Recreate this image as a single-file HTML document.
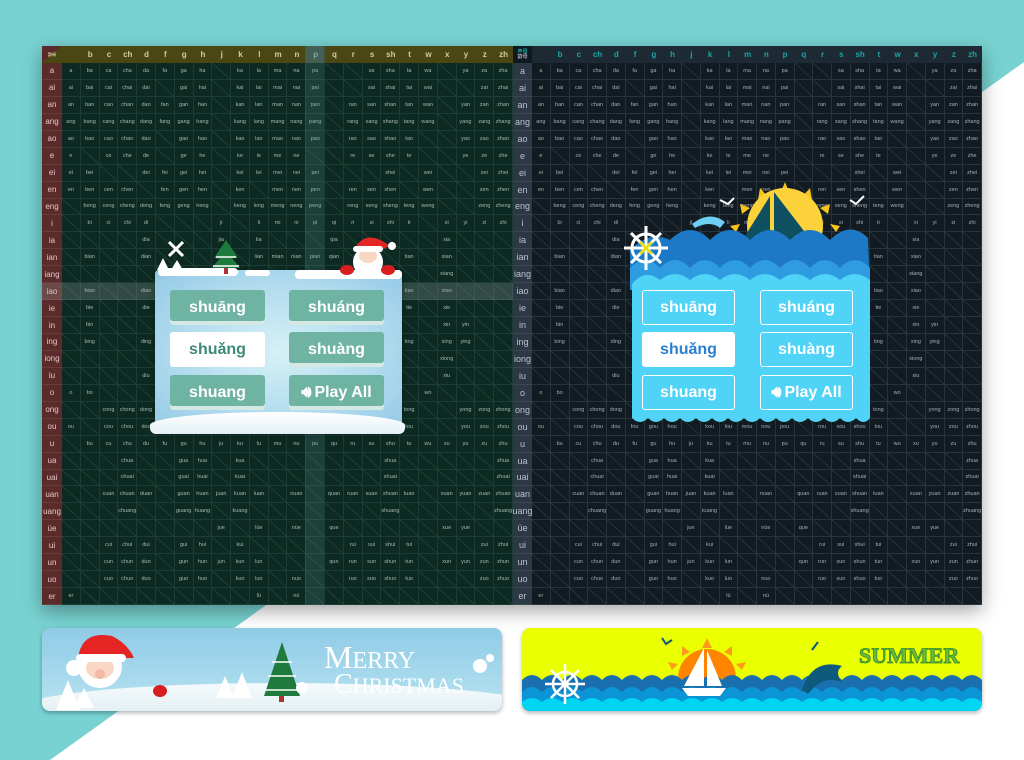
<!DOCTYPE html>
<html><head><meta charset="utf-8"><style>
*{margin:0;padding:0;box-sizing:border-box}
body{width:1024px;height:760px;position:relative;overflow:hidden;background:#fff;font-family:"Liberation Sans","Noto Sans CJK SC",sans-serif}
.bg{position:absolute;inset:0}
.wrap{position:absolute;left:42px;top:46px;width:940px;height:559px;box-shadow:0 6px 18px rgba(0,0,0,.35)}
.t{position:absolute;top:0;height:559px;display:grid;grid-template-rows:17px repeat(32,1fr)}
.L{left:0;width:471px;grid-template-columns:20px repeat(24,1fr);background:#0c2a21}
.R{left:471px;width:469px;grid-template-columns:19px repeat(24,1fr);background:#121b21}
.t i{font-style:normal;font-size:5.5px;color:#a7b7b2;display:flex;align-items:center;justify-content:center;overflow:hidden;white-space:nowrap}
.L i{border-right:1px solid #1d3d34;border-bottom:1px solid #1d3d34}
.R i{border-right:1px solid #28333b;border-bottom:1px solid #28333b;color:#a5adb2}
.L i:empty{background:linear-gradient(to top right,transparent calc(50% - .6px),#2a4c42 50%,transparent calc(50% + .6px))}
.R i:empty{background:linear-gradient(to top right,transparent calc(50% - .6px),#33404a 50%,transparent calc(50% + .6px))}
.t b{display:flex;align-items:center;justify-content:center;font-weight:normal;font-size:8px}
.L b{background:#5b2a2a;color:#e4c8c8;border-bottom:1px solid #6d3a3a}
.R b{background:#2c3944;color:#b8c4cc;border-bottom:1px solid #3a4852;font-size:9px}
.t u{text-decoration:none;display:flex;align-items:center;justify-content:center;font-size:8px;font-weight:bold}
.L u{background:#4a4712;color:#cfcfa8}
.R u{background:#1d2a33;color:#1aa5a5}
.ov{position:absolute}
.pop{position:absolute}
.cb{position:absolute;width:95px;height:35px;border-radius:3px;background:#6fb3a3;color:#fff;font-weight:bold;font-size:16px;display:flex;align-items:center;justify-content:center;box-shadow:inset 0 -4px 0 rgba(255,255,255,.7)}
.sb{position:absolute;width:93px;height:35px;border-radius:3px;border:1.5px solid #fff;color:#fff;font-weight:bold;font-size:16px;display:flex;align-items:center;justify-content:center}
</style></head><body>
<svg class="bg" width="1024" height="760"><polygon points="0,0 1024,0 1024,62 50,760 0,760" fill="#78d2d1"/></svg>

<div class="wrap">
<div class="t L">
<u style="font-size:4px;color:#d9d9b0;background:linear-gradient(to bottom right,#5b2a2a 50%,#4a4712 50%)">韵母</u><u></u><u>b</u><u>c</u><u>ch</u><u>d</u><u>f</u><u>g</u><u>h</u><u>j</u><u>k</u><u>l</u><u>m</u><u>n</u><u style="background:#3f5040;color:#8aa">p</u><u>q</u><u>r</u><u>s</u><u>sh</u><u>t</u><u>w</u><u>x</u><u>y</u><u>z</u><u>zh</u>
<b>a</b><i>a</i><i>ba</i><i>ca</i><i>cha</i><i>da</i><i>fa</i><i>ga</i><i>ha</i><i></i><i>ka</i><i>la</i><i>ma</i><i>na</i><i>pa</i><i></i><i></i><i>sa</i><i>sha</i><i>ta</i><i>wa</i><i></i><i>ya</i><i>za</i><i>zha</i>
<b>ai</b><i>ai</i><i>bai</i><i>cai</i><i>chai</i><i>dai</i><i></i><i>gai</i><i>hai</i><i></i><i>kai</i><i>lai</i><i>mai</i><i>nai</i><i>pai</i><i></i><i></i><i>sai</i><i>shai</i><i>tai</i><i>wai</i><i></i><i></i><i>zai</i><i>zhai</i>
<b>an</b><i>an</i><i>ban</i><i>can</i><i>chan</i><i>dan</i><i>fan</i><i>gan</i><i>han</i><i></i><i>kan</i><i>lan</i><i>man</i><i>nan</i><i>pan</i><i></i><i>ran</i><i>san</i><i>shan</i><i>tan</i><i>wan</i><i></i><i>yan</i><i>zan</i><i>zhan</i>
<b>ang</b><i>ang</i><i>bang</i><i>cang</i><i>chang</i><i>dang</i><i>fang</i><i>gang</i><i>hang</i><i></i><i>kang</i><i>lang</i><i>mang</i><i>nang</i><i>pang</i><i></i><i>rang</i><i>sang</i><i>shang</i><i>tang</i><i>wang</i><i></i><i>yang</i><i>zang</i><i>zhang</i>
<b>ao</b><i>ao</i><i>bao</i><i>cao</i><i>chao</i><i>dao</i><i></i><i>gao</i><i>hao</i><i></i><i>kao</i><i>lao</i><i>mao</i><i>nao</i><i>pao</i><i></i><i>rao</i><i>sao</i><i>shao</i><i>tao</i><i></i><i></i><i>yao</i><i>zao</i><i>zhao</i>
<b>e</b><i>e</i><i></i><i>ce</i><i>che</i><i>de</i><i></i><i>ge</i><i>he</i><i></i><i>ke</i><i>le</i><i>me</i><i>ne</i><i></i><i></i><i>re</i><i>se</i><i>she</i><i>te</i><i></i><i></i><i>ye</i><i>ze</i><i>zhe</i>
<b>ei</b><i>ei</i><i>bei</i><i></i><i></i><i>dei</i><i>fei</i><i>gei</i><i>hei</i><i></i><i>kei</i><i>lei</i><i>mei</i><i>nei</i><i>pei</i><i></i><i></i><i></i><i>shei</i><i></i><i>wei</i><i></i><i></i><i>zei</i><i>zhei</i>
<b>en</b><i>en</i><i>ben</i><i>cen</i><i>chen</i><i></i><i>fen</i><i>gen</i><i>hen</i><i></i><i>ken</i><i></i><i>men</i><i>nen</i><i>pen</i><i></i><i>ren</i><i>sen</i><i>shen</i><i></i><i>wen</i><i></i><i></i><i>zen</i><i>zhen</i>
<b>eng</b><i></i><i>beng</i><i>ceng</i><i>cheng</i><i>deng</i><i>feng</i><i>geng</i><i>heng</i><i></i><i>keng</i><i>leng</i><i>meng</i><i>neng</i><i>peng</i><i></i><i>reng</i><i>seng</i><i>sheng</i><i>teng</i><i>weng</i><i></i><i></i><i>zeng</i><i>zheng</i>
<b>i</b><i></i><i>bi</i><i>ci</i><i>chi</i><i>di</i><i></i><i></i><i></i><i>ji</i><i></i><i>li</i><i>mi</i><i>ni</i><i>pi</i><i>qi</i><i>ri</i><i>si</i><i>shi</i><i>ti</i><i></i><i>xi</i><i>yi</i><i>zi</i><i>zhi</i>
<b>ia</b><i></i><i></i><i></i><i></i><i>dia</i><i></i><i></i><i></i><i>jia</i><i></i><i>lia</i><i></i><i></i><i></i><i>qia</i><i></i><i></i><i></i><i></i><i></i><i>xia</i><i></i><i></i><i></i>
<b>ian</b><i></i><i>bian</i><i></i><i></i><i>dian</i><i></i><i></i><i></i><i>jian</i><i></i><i>lian</i><i>mian</i><i>nian</i><i>pian</i><i>qian</i><i></i><i></i><i></i><i>tian</i><i></i><i>xian</i><i></i><i></i><i></i>
<b>iang</b><i></i><i></i><i></i><i></i><i></i><i></i><i></i><i></i><i>jiang</i><i></i><i>liang</i><i></i><i>niang</i><i></i><i>qiang</i><i></i><i></i><i></i><i></i><i></i><i>xiang</i><i></i><i></i><i></i>
<b>iao</b><i></i><i>biao</i><i></i><i></i><i>diao</i><i></i><i></i><i></i><i>jiao</i><i></i><i>liao</i><i>miao</i><i>niao</i><i>piao</i><i>qiao</i><i></i><i></i><i></i><i>tiao</i><i></i><i>xiao</i><i></i><i></i><i></i>
<b>ie</b><i></i><i>bie</i><i></i><i></i><i>die</i><i></i><i></i><i></i><i>jie</i><i></i><i>lie</i><i>mie</i><i>nie</i><i>pie</i><i>qie</i><i></i><i></i><i></i><i>tie</i><i></i><i>xie</i><i></i><i></i><i></i>
<b>in</b><i></i><i>bin</i><i></i><i></i><i></i><i></i><i></i><i></i><i>jin</i><i></i><i>lin</i><i>min</i><i>nin</i><i>pin</i><i>qin</i><i></i><i></i><i></i><i></i><i></i><i>xin</i><i>yin</i><i></i><i></i>
<b>ing</b><i></i><i>bing</i><i></i><i></i><i>ding</i><i></i><i></i><i></i><i>jing</i><i></i><i>ling</i><i>ming</i><i>ning</i><i>ping</i><i>qing</i><i></i><i></i><i></i><i>ting</i><i></i><i>xing</i><i>ying</i><i></i><i></i>
<b>iong</b><i></i><i></i><i></i><i></i><i></i><i></i><i></i><i></i><i>jiong</i><i></i><i></i><i></i><i></i><i></i><i>qiong</i><i></i><i></i><i></i><i></i><i></i><i>xiong</i><i></i><i></i><i></i>
<b>iu</b><i></i><i></i><i></i><i></i><i>diu</i><i></i><i></i><i></i><i>jiu</i><i></i><i>liu</i><i>miu</i><i>niu</i><i></i><i>qiu</i><i></i><i></i><i></i><i></i><i></i><i>xiu</i><i></i><i></i><i></i>
<b>o</b><i>o</i><i>bo</i><i></i><i></i><i></i><i>fo</i><i></i><i></i><i></i><i></i><i></i><i>mo</i><i></i><i>po</i><i></i><i></i><i></i><i></i><i></i><i>wo</i><i></i><i></i><i></i><i></i>
<b>ong</b><i></i><i></i><i>cong</i><i>chong</i><i>dong</i><i></i><i>gong</i><i>hong</i><i></i><i>kong</i><i>long</i><i></i><i>nong</i><i></i><i></i><i>rong</i><i>song</i><i></i><i>tong</i><i></i><i></i><i>yong</i><i>zong</i><i>zhong</i>
<b>ou</b><i>ou</i><i></i><i>cou</i><i>chou</i><i>dou</i><i>fou</i><i>gou</i><i>hou</i><i></i><i>kou</i><i>lou</i><i>mou</i><i>nou</i><i>pou</i><i></i><i>rou</i><i>sou</i><i>shou</i><i>tou</i><i></i><i></i><i>you</i><i>zou</i><i>zhou</i>
<b>u</b><i></i><i>bu</i><i>cu</i><i>chu</i><i>du</i><i>fu</i><i>gu</i><i>hu</i><i>ju</i><i>ku</i><i>lu</i><i>mu</i><i>nu</i><i>pu</i><i>qu</i><i>ru</i><i>su</i><i>shu</i><i>tu</i><i>wu</i><i>xu</i><i>yu</i><i>zu</i><i>zhu</i>
<b>ua</b><i></i><i></i><i></i><i>chua</i><i></i><i></i><i>gua</i><i>hua</i><i></i><i>kua</i><i></i><i></i><i></i><i></i><i></i><i></i><i></i><i>shua</i><i></i><i></i><i></i><i></i><i></i><i>zhua</i>
<b>uai</b><i></i><i></i><i></i><i>chuai</i><i></i><i></i><i>guai</i><i>huai</i><i></i><i>kuai</i><i></i><i></i><i></i><i></i><i></i><i></i><i></i><i>shuai</i><i></i><i></i><i></i><i></i><i></i><i>zhuai</i>
<b>uan</b><i></i><i></i><i>cuan</i><i>chuan</i><i>duan</i><i></i><i>guan</i><i>huan</i><i>juan</i><i>kuan</i><i>luan</i><i></i><i>nuan</i><i></i><i>quan</i><i>ruan</i><i>suan</i><i>shuan</i><i>tuan</i><i></i><i>xuan</i><i>yuan</i><i>zuan</i><i>zhuan</i>
<b>uang</b><i></i><i></i><i></i><i>chuang</i><i></i><i></i><i>guang</i><i>huang</i><i></i><i>kuang</i><i></i><i></i><i></i><i></i><i></i><i></i><i></i><i>shuang</i><i></i><i></i><i></i><i></i><i></i><i>zhuang</i>
<b>üe</b><i></i><i></i><i></i><i></i><i></i><i></i><i></i><i></i><i>jue</i><i></i><i>lüe</i><i></i><i>nüe</i><i></i><i>que</i><i></i><i></i><i></i><i></i><i></i><i>xue</i><i>yue</i><i></i><i></i>
<b>ui</b><i></i><i></i><i>cui</i><i>chui</i><i>dui</i><i></i><i>gui</i><i>hui</i><i></i><i>kui</i><i></i><i></i><i></i><i></i><i></i><i>rui</i><i>sui</i><i>shui</i><i>tui</i><i></i><i></i><i></i><i>zui</i><i>zhui</i>
<b>un</b><i></i><i></i><i>cun</i><i>chun</i><i>dun</i><i></i><i>gun</i><i>hun</i><i>jun</i><i>kun</i><i>lun</i><i></i><i></i><i></i><i>qun</i><i>run</i><i>sun</i><i>shun</i><i>tun</i><i></i><i>xun</i><i>yun</i><i>zun</i><i>zhun</i>
<b>uo</b><i></i><i></i><i>cuo</i><i>chuo</i><i>duo</i><i></i><i>guo</i><i>huo</i><i></i><i>kuo</i><i>luo</i><i></i><i>nuo</i><i></i><i></i><i>ruo</i><i>suo</i><i>shuo</i><i>tuo</i><i></i><i></i><i></i><i>zuo</i><i>zhuo</i>
<b>er</b><i>er</i><i></i><i></i><i></i><i></i><i></i><i></i><i></i><i></i><i></i><i>lü</i><i></i><i>nü</i><i></i><i></i><i></i><i></i><i></i><i></i><i></i><i></i><i></i><i></i><i></i>
</div>
<div class="ov" style="left:263px;top:0;width:19px;height:559px;background:rgba(90,160,160,.2)"></div>
<div class="ov" style="left:0;top:237px;width:471px;height:17px;background:rgba(160,170,170,.25)"></div>

<div class="t R">
<u style="font-size:5px;line-height:1;flex-direction:column;background:#0f1a20;color:#1aa5a5">声母<span style="color:#aab">韵母</span></u><u></u><u>b</u><u>c</u><u>ch</u><u>d</u><u>f</u><u>g</u><u>h</u><u>j</u><u>k</u><u>l</u><u>m</u><u>n</u><u>p</u><u>q</u><u>r</u><u>s</u><u>sh</u><u>t</u><u>w</u><u>x</u><u>y</u><u>z</u><u>zh</u>
<b>a</b><i>a</i><i>ba</i><i>ca</i><i>cha</i><i>da</i><i>fa</i><i>ga</i><i>ha</i><i></i><i>ka</i><i>la</i><i>ma</i><i>na</i><i>pa</i><i></i><i></i><i>sa</i><i>sha</i><i>ta</i><i>wa</i><i></i><i>ya</i><i>za</i><i>zha</i>
<b>ai</b><i>ai</i><i>bai</i><i>cai</i><i>chai</i><i>dai</i><i></i><i>gai</i><i>hai</i><i></i><i>kai</i><i>lai</i><i>mai</i><i>nai</i><i>pai</i><i></i><i></i><i>sai</i><i>shai</i><i>tai</i><i>wai</i><i></i><i></i><i>zai</i><i>zhai</i>
<b>an</b><i>an</i><i>ban</i><i>can</i><i>chan</i><i>dan</i><i>fan</i><i>gan</i><i>han</i><i></i><i>kan</i><i>lan</i><i>man</i><i>nan</i><i>pan</i><i></i><i>ran</i><i>san</i><i>shan</i><i>tan</i><i>wan</i><i></i><i>yan</i><i>zan</i><i>zhan</i>
<b>ang</b><i>ang</i><i>bang</i><i>cang</i><i>chang</i><i>dang</i><i>fang</i><i>gang</i><i>hang</i><i></i><i>kang</i><i>lang</i><i>mang</i><i>nang</i><i>pang</i><i></i><i>rang</i><i>sang</i><i>shang</i><i>tang</i><i>wang</i><i></i><i>yang</i><i>zang</i><i>zhang</i>
<b>ao</b><i>ao</i><i>bao</i><i>cao</i><i>chao</i><i>dao</i><i></i><i>gao</i><i>hao</i><i></i><i>kao</i><i>lao</i><i>mao</i><i>nao</i><i>pao</i><i></i><i>rao</i><i>sao</i><i>shao</i><i>tao</i><i></i><i></i><i>yao</i><i>zao</i><i>zhao</i>
<b>e</b><i>e</i><i></i><i>ce</i><i>che</i><i>de</i><i></i><i>ge</i><i>he</i><i></i><i>ke</i><i>le</i><i>me</i><i>ne</i><i></i><i></i><i>re</i><i>se</i><i>she</i><i>te</i><i></i><i></i><i>ye</i><i>ze</i><i>zhe</i>
<b>ei</b><i>ei</i><i>bei</i><i></i><i></i><i>dei</i><i>fei</i><i>gei</i><i>hei</i><i></i><i>kei</i><i>lei</i><i>mei</i><i>nei</i><i>pei</i><i></i><i></i><i></i><i>shei</i><i></i><i>wei</i><i></i><i></i><i>zei</i><i>zhei</i>
<b>en</b><i>en</i><i>ben</i><i>cen</i><i>chen</i><i></i><i>fen</i><i>gen</i><i>hen</i><i></i><i>ken</i><i></i><i>men</i><i>nen</i><i>pen</i><i></i><i>ren</i><i>sen</i><i>shen</i><i></i><i>wen</i><i></i><i></i><i>zen</i><i>zhen</i>
<b>eng</b><i></i><i>beng</i><i>ceng</i><i>cheng</i><i>deng</i><i>feng</i><i>geng</i><i>heng</i><i></i><i>keng</i><i>leng</i><i>meng</i><i>neng</i><i>peng</i><i></i><i>reng</i><i>seng</i><i>sheng</i><i>teng</i><i>weng</i><i></i><i></i><i>zeng</i><i>zheng</i>
<b>i</b><i></i><i>bi</i><i>ci</i><i>chi</i><i>di</i><i></i><i></i><i></i><i>ji</i><i></i><i>li</i><i>mi</i><i>ni</i><i>pi</i><i>qi</i><i>ri</i><i>si</i><i>shi</i><i>ti</i><i></i><i>xi</i><i>yi</i><i>zi</i><i>zhi</i>
<b>ia</b><i></i><i></i><i></i><i></i><i>dia</i><i></i><i></i><i></i><i>jia</i><i></i><i>lia</i><i></i><i></i><i></i><i>qia</i><i></i><i></i><i></i><i></i><i></i><i>xia</i><i></i><i></i><i></i>
<b>ian</b><i></i><i>bian</i><i></i><i></i><i>dian</i><i></i><i></i><i></i><i>jian</i><i></i><i>lian</i><i>mian</i><i>nian</i><i>pian</i><i>qian</i><i></i><i></i><i></i><i>tian</i><i></i><i>xian</i><i></i><i></i><i></i>
<b>iang</b><i></i><i></i><i></i><i></i><i></i><i></i><i></i><i></i><i>jiang</i><i></i><i>liang</i><i></i><i>niang</i><i></i><i>qiang</i><i></i><i></i><i></i><i></i><i></i><i>xiang</i><i></i><i></i><i></i>
<b>iao</b><i></i><i>biao</i><i></i><i></i><i>diao</i><i></i><i></i><i></i><i>jiao</i><i></i><i>liao</i><i>miao</i><i>niao</i><i>piao</i><i>qiao</i><i></i><i></i><i></i><i>tiao</i><i></i><i>xiao</i><i></i><i></i><i></i>
<b>ie</b><i></i><i>bie</i><i></i><i></i><i>die</i><i></i><i></i><i></i><i>jie</i><i></i><i>lie</i><i>mie</i><i>nie</i><i>pie</i><i>qie</i><i></i><i></i><i></i><i>tie</i><i></i><i>xie</i><i></i><i></i><i></i>
<b>in</b><i></i><i>bin</i><i></i><i></i><i></i><i></i><i></i><i></i><i>jin</i><i></i><i>lin</i><i>min</i><i>nin</i><i>pin</i><i>qin</i><i></i><i></i><i></i><i></i><i></i><i>xin</i><i>yin</i><i></i><i></i>
<b>ing</b><i></i><i>bing</i><i></i><i></i><i>ding</i><i></i><i></i><i></i><i>jing</i><i></i><i>ling</i><i>ming</i><i>ning</i><i>ping</i><i>qing</i><i></i><i></i><i></i><i>ting</i><i></i><i>xing</i><i>ying</i><i></i><i></i>
<b>iong</b><i></i><i></i><i></i><i></i><i></i><i></i><i></i><i></i><i>jiong</i><i></i><i></i><i></i><i></i><i></i><i>qiong</i><i></i><i></i><i></i><i></i><i></i><i>xiong</i><i></i><i></i><i></i>
<b>iu</b><i></i><i></i><i></i><i></i><i>diu</i><i></i><i></i><i></i><i>jiu</i><i></i><i>liu</i><i>miu</i><i>niu</i><i></i><i>qiu</i><i></i><i></i><i></i><i></i><i></i><i>xiu</i><i></i><i></i><i></i>
<b>o</b><i>o</i><i>bo</i><i></i><i></i><i></i><i>fo</i><i></i><i></i><i></i><i></i><i></i><i>mo</i><i></i><i>po</i><i></i><i></i><i></i><i></i><i></i><i>wo</i><i></i><i></i><i></i><i></i>
<b>ong</b><i></i><i></i><i>cong</i><i>chong</i><i>dong</i><i></i><i>gong</i><i>hong</i><i></i><i>kong</i><i>long</i><i></i><i>nong</i><i></i><i></i><i>rong</i><i>song</i><i></i><i>tong</i><i></i><i></i><i>yong</i><i>zong</i><i>zhong</i>
<b>ou</b><i>ou</i><i></i><i>cou</i><i>chou</i><i>dou</i><i>fou</i><i>gou</i><i>hou</i><i></i><i>kou</i><i>lou</i><i>mou</i><i>nou</i><i>pou</i><i></i><i>rou</i><i>sou</i><i>shou</i><i>tou</i><i></i><i></i><i>you</i><i>zou</i><i>zhou</i>
<b>u</b><i></i><i>bu</i><i>cu</i><i>chu</i><i>du</i><i>fu</i><i>gu</i><i>hu</i><i>ju</i><i>ku</i><i>lu</i><i>mu</i><i>nu</i><i>pu</i><i>qu</i><i>ru</i><i>su</i><i>shu</i><i>tu</i><i>wu</i><i>xu</i><i>yu</i><i>zu</i><i>zhu</i>
<b>ua</b><i></i><i></i><i></i><i>chua</i><i></i><i></i><i>gua</i><i>hua</i><i></i><i>kua</i><i></i><i></i><i></i><i></i><i></i><i></i><i></i><i>shua</i><i></i><i></i><i></i><i></i><i></i><i>zhua</i>
<b>uai</b><i></i><i></i><i></i><i>chuai</i><i></i><i></i><i>guai</i><i>huai</i><i></i><i>kuai</i><i></i><i></i><i></i><i></i><i></i><i></i><i></i><i>shuai</i><i></i><i></i><i></i><i></i><i></i><i>zhuai</i>
<b>uan</b><i></i><i></i><i>cuan</i><i>chuan</i><i>duan</i><i></i><i>guan</i><i>huan</i><i>juan</i><i>kuan</i><i>luan</i><i></i><i>nuan</i><i></i><i>quan</i><i>ruan</i><i>suan</i><i>shuan</i><i>tuan</i><i></i><i>xuan</i><i>yuan</i><i>zuan</i><i>zhuan</i>
<b>uang</b><i></i><i></i><i></i><i>chuang</i><i></i><i></i><i>guang</i><i>huang</i><i></i><i>kuang</i><i></i><i></i><i></i><i></i><i></i><i></i><i></i><i>shuang</i><i></i><i></i><i></i><i></i><i></i><i>zhuang</i>
<b>üe</b><i></i><i></i><i></i><i></i><i></i><i></i><i></i><i></i><i>jue</i><i></i><i>lüe</i><i></i><i>nüe</i><i></i><i>que</i><i></i><i></i><i></i><i></i><i></i><i>xue</i><i>yue</i><i></i><i></i>
<b>ui</b><i></i><i></i><i>cui</i><i>chui</i><i>dui</i><i></i><i>gui</i><i>hui</i><i></i><i>kui</i><i></i><i></i><i></i><i></i><i></i><i>rui</i><i>sui</i><i>shui</i><i>tui</i><i></i><i></i><i></i><i>zui</i><i>zhui</i>
<b>un</b><i></i><i></i><i>cun</i><i>chun</i><i>dun</i><i></i><i>gun</i><i>hun</i><i>jun</i><i>kun</i><i>lun</i><i></i><i></i><i></i><i>qun</i><i>run</i><i>sun</i><i>shun</i><i>tun</i><i></i><i>xun</i><i>yun</i><i>zun</i><i>zhun</i>
<b>uo</b><i></i><i></i><i>cuo</i><i>chuo</i><i>duo</i><i></i><i>guo</i><i>huo</i><i></i><i>kuo</i><i>luo</i><i></i><i>nuo</i><i></i><i></i><i>ruo</i><i>suo</i><i>shuo</i><i>tuo</i><i></i><i></i><i></i><i>zuo</i><i>zhuo</i>
<b>er</b><i>er</i><i></i><i></i><i></i><i></i><i></i><i></i><i></i><i></i><i></i><i>lü</i><i></i><i>nü</i><i></i><i></i><i></i><i></i><i></i><i></i><i></i><i></i><i></i><i></i><i></i>
</div>
</div>

<!-- Christmas popup -->
<div class="pop" style="left:155px;top:270px;width:247px;height:163px;border-radius:4px;background:radial-gradient(ellipse at 50% 50%,#d6f1f7 0%,#a9d6ec 70%,#92c8e6 100%);box-shadow:0 2px 6px rgba(0,0,0,.3)"></div>
<div class="pop" style="left:150px;top:412px;width:255px;height:22px;border-radius:50% 50% 6px 6px/60% 60% 6px 6px;background:linear-gradient(#fff,#e4f1f6)"></div>
<div class="pop" style="left:158px;top:268px;width:80px;height:8px;border-radius:4px;background:#fff"></div>
<div class="pop" style="left:245px;top:270px;width:25px;height:6px;border-radius:3px;background:#fff"></div>
<div class="pop" style="left:295px;top:270px;width:107px;height:9px;border-radius:4px;background:#fff"></div>
<div class="cb" style="left:170px;top:290px">shuāng</div>
<div class="cb" style="left:289px;top:290px">shuáng</div>
<div class="cb" style="left:170px;top:332px;background:#fff;color:#3d8a78;box-shadow:none">shuǎng</div>
<div class="cb" style="left:289px;top:332px">shuàng</div>
<div class="cb" style="left:170px;top:375px">shuang</div>
<div class="cb" style="left:289px;top:375px">🔊&#xFE0E;<span style="margin-left:3px">Play All</span></div>
<svg class="pop" style="left:150px;top:232px" width="260" height="50">
<path d="M19 10 L33 24 M33 10 L19 24" stroke="#fff" stroke-width="3"/>
<polygon points="13,26 7,38 19,38" fill="#fff"/><polygon points="27,28 21,38 33,38" fill="#fff"/>
<polygon points="76,8 64,26 70,26 62,36 90,36 82,26 88,26" fill="#1f7a3e"/><rect x="74" y="36" width="4" height="6" fill="#a33"/>
<path d="M66 25 h20 M63 34 h26" stroke="#fff" stroke-width="1.5"/>
<circle cx="218" cy="30" r="15" fill="#fff"/><ellipse cx="218" cy="24" rx="9" ry="7" fill="#f7d6c2"/>
<path d="M204 18 Q214 -2 234 10 L240 14 L233 17 Z" fill="#e32727"/><rect x="203" y="14" width="30" height="6" rx="3" fill="#fff"/><circle cx="242" cy="14" r="4" fill="#fff"/>
<ellipse cx="197" cy="38" rx="7" ry="5" fill="#d71f1f"/><ellipse cx="238" cy="38" rx="7" ry="5" fill="#d71f1f"/>
</svg>

<!-- Summer popup -->
<svg class="pop" style="left:600px;top:180px" width="290" height="260">
<g fill="#f8c51c"><polygon points="185,2 180,14 190,14"/><polygon points="160,8 158,20 168,17"/><polygon points="210,8 202,17 212,20"/><polygon points="140,24 142,34 150,28"/><polygon points="230,24 220,28 228,34"/><polygon points="130,46 136,52 140,44"/><polygon points="240,46 230,44 236,52"/></g>
<circle cx="185" cy="46" r="38" fill="#fbd23a"/>
<polygon points="170,16 170,64 140,64" fill="#0f5060"/><polygon points="174,12 174,64 214,64" fill="#0f5060"/>
<path d="M70 60 Q90 40 110 60 Q130 40 150 60 Q170 40 190 60 Q210 40 230 60 Q250 40 268 58 L270 110 L30 110 L30 70 Q50 50 70 60Z" fill="#1d79c6"/>
<path d="M30 88 Q45 72 60 88 Q75 72 90 88 Q105 72 120 88 Q135 72 150 88 Q165 72 180 88 Q195 72 210 88 Q225 72 240 88 Q255 72 270 88 L270 110 L30 110Z" fill="#2f9be0"/>
<path d="M32 104 L32 238 Q40 246 48 238 Q56 246 64 238 Q72 246 80 238 Q88 246 96 238 Q104 246 112 238 Q120 246 128 238 Q136 246 144 238 Q152 246 160 238 Q168 246 176 238 Q184 246 192 238 Q200 246 208 238 Q216 246 224 238 Q232 246 240 238 Q248 246 256 238 Q264 246 270 238 L270 100 Q255 88 240 100 Q225 88 210 100 Q195 88 180 100 Q165 88 150 100 Q135 88 120 100 Q105 88 90 100 Q75 88 60 100 Q45 88 32 104Z" fill="#4fd3f6"/>
<path d="M92 44 Q110 30 125 42 L120 48 Q110 40 95 48Z" fill="#6ecff5"/>
<g stroke="#fff" stroke-width="3" fill="none"><circle cx="46" cy="68" r="14"/><path d="M24 68 H68 M46 46 V90 M31 53 L61 83 M61 53 L31 83"/></g>
<path d="M40 62 L52 74 M52 62 L40 74" stroke="#e8e000" stroke-width="2.5"/>
<path d="M120 20 l8 4 l6 -6 M250 20 l6 4 l8 -8" stroke="#fff" stroke-width="2" fill="none"/>
</svg>
<div class="sb" style="left:642px;top:290px">shuāng</div>
<div class="sb" style="left:760px;top:290px">shuáng</div>
<div class="sb" style="left:642px;top:332px;background:#fff;color:#2a7fd0">shuǎng</div>
<div class="sb" style="left:760px;top:332px">shuàng</div>
<div class="sb" style="left:642px;top:375px">shuang</div>
<div class="sb" style="left:760px;top:375px">🔊&#xFE0E;<span style="margin-left:3px">Play All</span></div>

<!-- Christmas banner -->
<div style="position:absolute;left:42px;top:628px;width:460px;height:83px;border-radius:8px;overflow:hidden;background:linear-gradient(#8fcbe6,#b8e3f1);box-shadow:0 2px 4px rgba(0,0,0,.3)">
<div style="position:absolute;left:-20px;top:55px;width:520px;height:50px;border-radius:50%;background:linear-gradient(#f4fafc,#d9e9ee)"></div>
<svg style="position:absolute;left:0;top:0" width="460" height="83">
<circle cx="58" cy="38" r="22" fill="#fff"/><ellipse cx="58" cy="40" rx="14" ry="11" fill="#f8d8c4"/><circle cx="58" cy="46" r="5" fill="#f2b9a8"/>
<path d="M36 30 Q40 2 70 8 Q86 16 92 30 Z" fill="#e52424"/><rect x="34" y="26" width="50" height="8" rx="4" fill="#fff"/><circle cx="32" cy="40" r="8" fill="#fff"/>
<ellipse cx="118" cy="63" rx="7" ry="6" fill="#d71f1f"/>
<polygon points="26,52 14,82 38,82" fill="#fff"/><polygon points="42,60 32,80 52,80" fill="#fff"/>
<polygon points="240,14 222,68 258,68" fill="#1f7a3e"/><rect x="237" y="68" width="5" height="6" fill="#a33"/>
<path d="M230 34 h20 M226 48 h28 M223 62 h34" stroke="#fff" stroke-width="1.5"/>
<polygon points="183,48 174,70 192,70" fill="#fff"/><polygon points="200,44 190,70 210,70" fill="#fff"/>
<circle cx="438" cy="38" r="7" fill="#fff"/><circle cx="448" cy="30" r="4" fill="#fff"/><circle cx="260" cy="60" r="6" fill="#fff"/>
<text x="282" y="40" font-family="Liberation Serif,serif" font-size="32" fill="#fff">M<tspan font-size="24">ERRY</tspan></text>
<text x="292" y="65" font-family="Liberation Serif,serif" font-size="28" fill="#fff">C<tspan font-size="22">HRISTMAS</tspan></text>
</svg>
</div>

<!-- Summer banner -->
<div style="position:absolute;left:522px;top:628px;width:460px;height:83px;border-radius:8px;overflow:hidden;background:#eaff00;box-shadow:0 2px 4px rgba(0,0,0,.3)">
<svg style="position:absolute;left:0;top:0" width="460" height="83">
<g fill="#ff9a1a"><polygon points="185,10 180,20 190,20"/><polygon points="160,18 160,28 168,24"/><polygon points="210,18 202,24 210,28"/><polygon points="146,34 150,42 156,36"/><polygon points="224,34 214,36 220,42"/></g>
<circle cx="185" cy="50" r="29" fill="#ff8400"/>
<path d="M0 52 Q10 42 20 52 Q30 42 40 52 Q50 42 60 52 Q70 42 80 52 Q90 42 100 52 Q110 42 120 52 Q130 42 140 52 Q150 42 160 52 Q170 42 180 52 Q190 42 200 52 Q210 42 220 52 Q230 42 240 52 Q250 42 260 52 Q270 42 280 52 Q290 42 300 52 Q310 42 320 52 Q330 42 340 52 Q350 42 360 52 Q370 42 380 52 Q390 42 400 52 Q410 42 420 52 Q430 42 440 52 Q450 42 460 52 V83 H0Z" fill="#1a6fae"/>
<path d="M0 64 Q10 54 20 64 Q30 54 40 64 Q50 54 60 64 Q70 54 80 64 Q90 54 100 64 Q110 54 120 64 Q130 54 140 64 Q150 54 160 64 Q170 54 180 64 Q190 54 200 64 Q210 54 220 64 Q230 54 240 64 Q250 54 260 64 Q270 54 280 64 Q290 54 300 64 Q310 54 320 64 Q330 54 340 64 Q350 54 360 64 Q370 54 380 64 Q390 54 400 64 Q410 54 420 64 Q430 54 440 64 Q450 54 460 64 V83 H0Z" fill="#0b95d6"/>
<path d="M0 74 Q10 66 20 74 Q30 66 40 74 Q50 66 60 74 Q70 66 80 74 Q90 66 100 74 Q110 66 120 74 Q130 66 140 74 Q150 66 160 74 Q170 66 180 74 Q190 66 200 74 Q210 66 220 74 Q230 66 240 74 Q250 66 260 74 Q270 66 280 74 Q290 66 300 74 Q310 66 320 74 Q330 66 340 74 Q350 66 360 74 Q370 66 380 74 Q390 66 400 74 Q410 66 420 74 Q430 66 440 74 Q450 66 460 74 V83 H0Z" fill="#00d6f4"/>
<polygon points="182,20 182,58 162,58" fill="#fff"/><polygon points="185,22 185,58 200,58" fill="#fff"/><path d="M160 60 h44 l-6 8 h-32z" fill="#fff"/>
<g stroke="#fff" stroke-width="2.5" fill="none"><circle cx="43" cy="56" r="12"/><path d="M23 56 H63 M43 36 V76 M29 42 L57 70 M57 42 L29 70"/></g>
<path d="M280 62 Q290 30 320 38 Q312 44 320 54 Q308 50 300 54 Q294 56 286 66Z" fill="#0e5a7c"/>
<path d="M140 10 l4 6 l6 -4 M296 14 l-6 8" stroke="#0e5a7c" stroke-width="2" fill="none"/>
<text x="337" y="35" font-family="Liberation Serif,serif" font-weight="bold" font-size="22" fill="#6dbb3a" stroke="#2f8a2f" stroke-width=".8">SUMMER</text>
</svg>
</div>
</body></html>
